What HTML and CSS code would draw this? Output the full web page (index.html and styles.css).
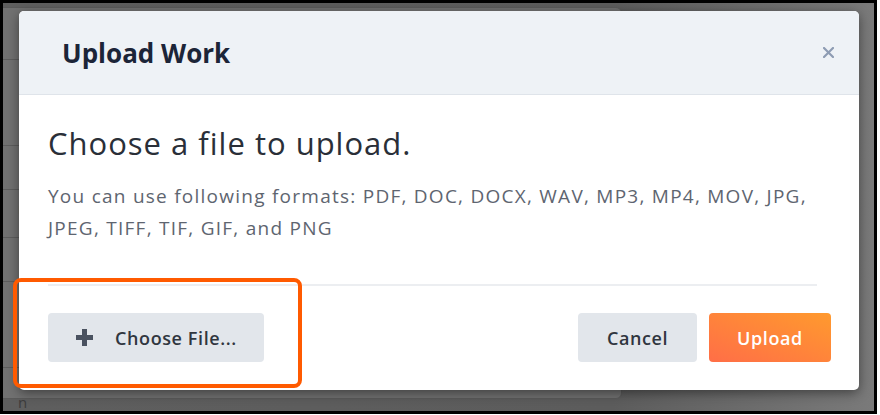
FILE: index.html
```html
<!DOCTYPE html>
<html lang="en">
<head>
<meta charset="utf-8">
<title>Upload Work</title>
<link rel="stylesheet" href="styles.css">
</head>
<body>
<div class="frame">
  <div class="under-card">
    <div class="under-row"><span class="under-text">ilu</span></div>
    <div class="under-row tall"></div>
    <div class="under-row"></div>
    <div class="under-row short"><span class="under-text">n-</span></div>
    <div class="under-row"></div>
    <div class="under-row tall"></div>
    <div class="under-row"><span class="under-text low">n</span></div>
  </div>

  <div class="modal">
    <div class="modal-header">
      <h2 class="modal-title">Upload Work</h2>
      <span class="modal-close" aria-label="Close">
        <svg width="11" height="11" viewBox="0 0 11 11"><path d="M1 1 L10 10 M10 1 L1 10" stroke="#8d9cb3" stroke-width="2.2" stroke-linecap="round"/></svg>
      </span>
    </div>
    <div class="modal-body">
      <h1 class="lead">Choose a file to upload.</h1>
      <p class="formats">You can use following formats: PDF, DOC, DOCX, WAV, MP3, MP4, MOV, JPG, JPEG, TIFF, TIF, GIF, and PNG</p>
      <div class="divider"></div>
      <div class="footer">
        <button class="btn btn-file">
          <svg class="plus" width="19" height="19" viewBox="0 0 19 19"><path d="M9.5 1 V18 M1 9.5 H18" stroke="#4a5260" stroke-width="5"/></svg>
          <span>Choose File...</span>
        </button>
        <div class="actions">
          <button class="btn btn-cancel">Cancel</button>
          <button class="btn btn-upload">Upload</button>
        </div>
      </div>
    </div>
  </div>

  <div class="highlight"></div>
</div>
</body>
</html>
```

FILE: styles.css
```css
* { box-sizing: border-box; }

html, body {
  margin: 0;
  padding: 0;
  background: #ffffff;
}

body {
  font-family: "Open Sans", "Liberation Sans", sans-serif;
}

.frame {
  position: relative;
  width: 877px;
  height: 414px;
  border: 3px solid #000;
  overflow: hidden;
  background: linear-gradient(to right, #5e5e5e 0%, #5c5c5c 70%, #7a7a7a 100%);
}

.under-card {
  position: absolute;
  left: -30px;
  top: 4px;
  width: 649px;
  height: 392px;
  background: #717171;
  border: 1px solid #5a5a5a;
  border-radius: 6px;
  padding-top: 8px;
}

.under-row {
  height: 44px;
  border-bottom: 1px solid #5d5d5d;
  position: relative;
}
.under-row.tall { height: 86px; }
.under-row.short { height: 48px; }

.under-text {
  position: absolute;
  left: 44px;
  top: 8px;
  font-size: 15px;
  color: #3c3c3c;
}
.under-text.low { top: 24px; }

.modal {
  position: absolute;
  left: 16px;
  top: 8px;
  width: 840px;
  height: 379px;
  background: #ffffff;
  border-radius: 5px;
  box-shadow: 0 3px 12px rgba(0, 0, 0, 0.45);
  overflow: hidden;
  display: flex;
  flex-direction: column;
}

.modal-header {
  height: 84px;
  flex: none;
  display: flex;
  align-items: center;
  justify-content: space-between;
  padding: 0 25px 0 43px;
  background: #eef2f6;
  border-bottom: 1px solid #dfe4ea;
}

.modal-title {
  margin: 0;
  font-size: 26px;
  font-weight: 700;
  color: #1c2538;
  line-height: 1;
}

.modal-close {
  display: flex;
  width: 11px;
  height: 11px;
}

.modal-body {
  flex: 1;
  padding: 28px 28px 28px 29px;
  display: flex;
  flex-direction: column;
}

.lead {
  margin: 0;
  font-size: 31px;
  font-weight: 400;
  letter-spacing: 1px;
  line-height: 40px;
  color: #2a2f38;
}

.formats {
  margin: 17px 0 0;
  font-size: 19px;
  line-height: 32px;
  color: #5e6570;
  letter-spacing: 1.25px;
}

.divider {
  margin: 40px 14px 0 0;
  height: 2px;
  background: #eceef1;
}

.footer {
  margin-top: 27px;
  display: flex;
  justify-content: space-between;
  align-items: center;
}

.actions {
  display: flex;
  gap: 12px;
}

.btn {
  height: 49px;
  border: none;
  border-radius: 4px;
  font-family: "Open Sans", "Liberation Sans", sans-serif;
  font-size: 18px;
  font-weight: 600;
  letter-spacing: 0.6px;
  display: flex;
  align-items: center;
  justify-content: center;
  padding: 0;
}

.btn-file {
  width: 216px;
  justify-content: flex-start;
  padding-left: 27px;
  gap: 21px;
  background: #e2e6eb;
  color: #30363f;
}

.plus { flex: none; }

.btn-cancel {
  width: 119px;
  background: #e2e6eb;
  color: #30363f;
}

.btn-upload {
  width: 122px;
  background: linear-gradient(to right top, #ff6e47, #ff9a2e);
  color: #ffffff;
}

.highlight {
  position: absolute;
  left: 10px;
  top: 275px;
  width: 289px;
  height: 110px;
  border: 4px solid #ff5a00;
  border-radius: 8px;
  pointer-events: none;
}
```
